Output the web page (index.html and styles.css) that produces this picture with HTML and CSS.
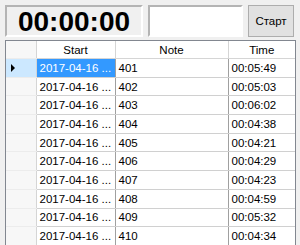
FILE: index.html
```html
<!DOCTYPE html>
<html lang="ru">

<head>
    <meta charset="UTF-8">
    <meta name="viewport" content="width=device-width, initial-scale=1.0">
    <title>таймер</title>
    <link rel="stylesheet" href="styles.css">
</head>

<body>
    <div class="top">
        <div class="timer">00:00:00</div>
        <input type="text" class="note-input">
        <button class="start-btn">Старт</button>
    </div>

    <div class="grid-wrap">
        <table class="grid">
            <colgroup>
                <col class="c-head">
                <col class="c-start">
                <col class="c-note">
                <col>
            </colgroup>
            <thead>
                <tr>
                    <th class="row-head"></th>
                    <th>Start</th>
                    <th>Note</th>
                    <th>Time</th>
                </tr>
            </thead>
            <tbody>
                <tr class="current">
                    <td class="row-head"><span class="arrow"></span></td>
                    <td class="selected">2017-04-16 ...</td>
                    <td>401</td>
                    <td>00:05:49</td>
                </tr>
                <tr>
                    <td class="row-head"></td>
                    <td>2017-04-16 ...</td>
                    <td>402</td>
                    <td>00:05:03</td>
                </tr>
                <tr>
                    <td class="row-head"></td>
                    <td>2017-04-16 ...</td>
                    <td>403</td>
                    <td>00:06:02</td>
                </tr>
                <tr>
                    <td class="row-head"></td>
                    <td>2017-04-16 ...</td>
                    <td>404</td>
                    <td>00:04:38</td>
                </tr>
                <tr>
                    <td class="row-head"></td>
                    <td>2017-04-16 ...</td>
                    <td>405</td>
                    <td>00:04:21</td>
                </tr>
                <tr>
                    <td class="row-head"></td>
                    <td>2017-04-16 ...</td>
                    <td>406</td>
                    <td>00:04:29</td>
                </tr>
                <tr>
                    <td class="row-head"></td>
                    <td>2017-04-16 ...</td>
                    <td>407</td>
                    <td>00:04:23</td>
                </tr>
                <tr>
                    <td class="row-head"></td>
                    <td>2017-04-16 ...</td>
                    <td>408</td>
                    <td>00:04:59</td>
                </tr>
                <tr>
                    <td class="row-head"></td>
                    <td>2017-04-16 ...</td>
                    <td>409</td>
                    <td>00:05:32</td>
                </tr>
                <tr>
                    <td class="row-head"></td>
                    <td>2017-04-16 ...</td>
                    <td>410</td>
                    <td>00:04:34</td>
                </tr>
            </tbody>
        </table>
    </div>
</body>

</html>
```

FILE: styles.css
```css
body {
    margin: 0;
    width: 300px;
    height: 245px;
    overflow: hidden;
    background-color: #f0f0f0;
    font-family: "Liberation Sans", Arial, sans-serif;
    font-size: 11.5px;
    color: #000;
}

.top {
    display: flex;
    gap: 5px;
    padding: 5px 6px 0 5px;
    height: 32px;
}

.timer {
    width: 134px;
    height: 28px;
    border: 2px solid;
    border-color: #b4b4b4 #fff #fff #b4b4b4;
    background-color: #f0f0f0;
    font-size: 28px;
    font-weight: bold;
    line-height: 30px;
    text-align: center;
}

.note-input {
    width: 91px;
    height: 28px;
    margin: 0;
    padding: 0;
    border: 2px solid;
    border-color: #b4b4b4 #fff #fff #b4b4b4;
    background-color: #fff;
}

.start-btn {
    width: 46px;
    height: 32px;
    margin: 0;
    padding: 0;
    border: 1px solid #adadad;
    background-color: #e1e1e1;
    font-family: "Liberation Sans", Arial, sans-serif;
    font-size: 11.5px;
}

.grid-wrap {
    margin: 3px 4px 0 5px;
    border: 1px solid #828790;
    background-color: #fff;
    height: 210px;
    overflow: hidden;
}

.grid {
    border-collapse: collapse;
    table-layout: fixed;
    width: 100%;
}

.c-head {
    width: 30px;
}

.c-start {
    width: 79px;
}

.c-note {
    width: 113px;
}

.grid th {
    height: 17px;
    padding: 0;
    font-weight: normal;
    background-color: #fff;
    border-right: 1px solid #d5d5d5;
    border-bottom: 1px solid #d5d5d5;
    text-align: center;
}

.grid td {
    height: 17.7px;
    padding: 0 0 0 3px;
    border-right: 1px solid #a0a0a0;
    border-bottom: 1px solid #d0d0d0;
    white-space: nowrap;
    overflow: hidden;
}

.grid .row-head {
    padding: 0;
    background-color: #f7f7f7;
    border-right: 1px solid #d5d5d5;
    border-bottom: 1px solid #ececec;
}

.grid tr:last-child td {
    border-bottom: none;
}

.grid td:last-child,
.grid th:last-child {
    border-right: none;
}

.current .row-head {
    background-color: #cce8ff;
}

.arrow {
    display: inline-block;
    margin-left: 5px;
    border-left: 4px solid #000;
    border-top: 4px solid transparent;
    border-bottom: 4px solid transparent;
}

.selected {
    background-color: #3399ff;
    color: #fff;
}
```
